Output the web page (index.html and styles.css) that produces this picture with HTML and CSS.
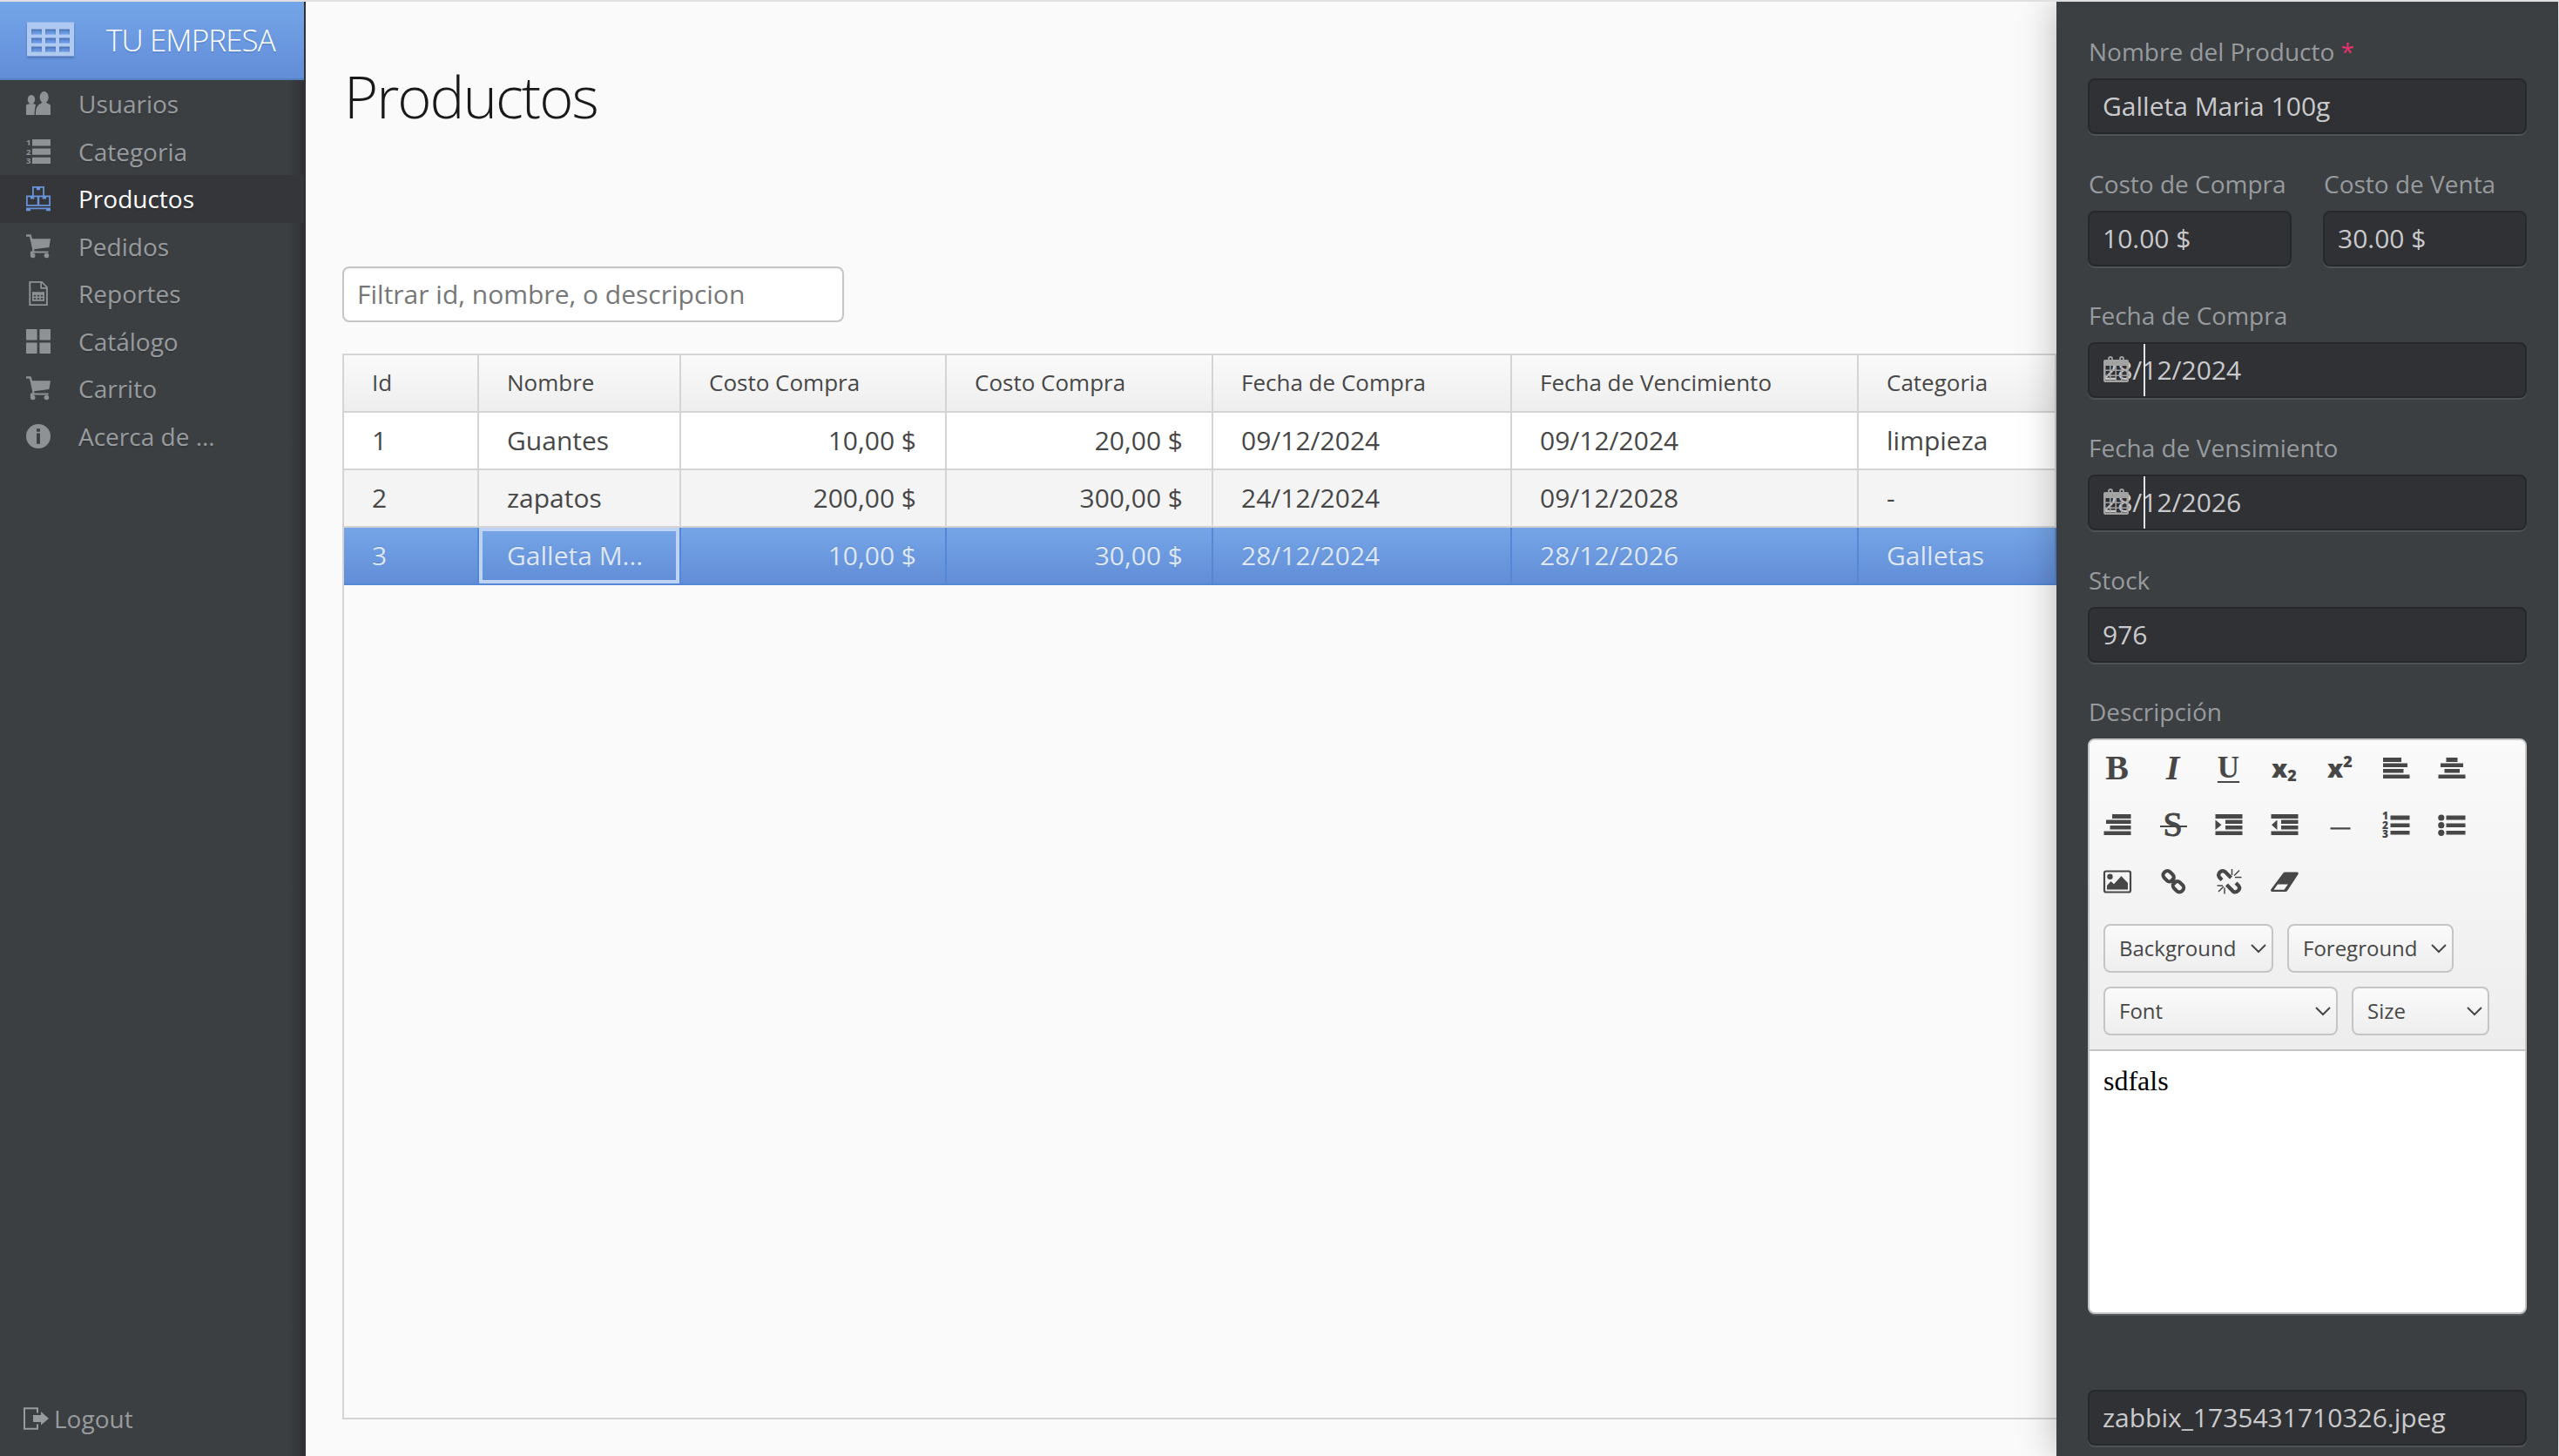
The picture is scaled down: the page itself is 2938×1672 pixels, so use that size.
FILE: index.html
```html
<!DOCTYPE html>
<html lang="es">
<head>
    <meta charset="UTF-8">
    <meta name="viewport" content="width=device-width, initial-scale=1.0">
    <link rel="stylesheet" href="styles.css">
    <title>Productos</title>
</head>
<body>

    <nav class="sidebar">
        <div class="brand">
            <svg class="brand-icon" viewBox="0 0 54 40">
                <path fill-rule="evenodd" d="M0 .5H54V39.5H0ZM5 8.5v6h12v-6ZM21 8.5v6h12v-6ZM37 8.5v6h12v-6ZM5 18.5v6h12v-6ZM21 18.5v6h12v-6ZM37 18.5v6h12v-6ZM5 28.5v6h12v-6ZM21 28.5v6h12v-6ZM37 28.5v6h12v-6Z"/>
            </svg>
            <span>TU EMPRESA</span>
        </div>

        <div class="menu">
            <div class="menu-item">
                <svg viewBox="0 0 16 16"><ellipse cx="3.4" cy="5.3" rx="2.4" ry="3"/><path d="M0 8.8Q1 8.2 2 8.1h3q1 .1 1.4.9Q5.6 10 5.5 15.4H0Z"/><ellipse cx="11.8" cy="3.8" rx="2.9" ry="3.8"/><path d="M6.2 15.4Q6 9.5 9.5 8l1-.9h2.7l1 .9q1.4.3 1.8 1.2v6.2Z"/></svg>
                <span>Usuarios</span>
            </div>
            <div class="menu-item">
                <svg viewBox="0 0 16 16"><path d="M4 0h12v4.3H4ZM4 6h12v4.2H4ZM4 11.8h12v4.2H4Z"/><text class="num" x="0" y="4">1</text><text class="num" x="0" y="10">2</text><text class="num" x="0" y="16">3</text></svg>
                <span>Categoria</span>
            </div>
            <div class="menu-item selected">
                <svg viewBox="0 0 16 16"><path fill-rule="evenodd" d="M4 0h8v6h4v7H0V6h4ZM5 1v5h6V1H9.2v1.4H6.8V1ZM1 7v5h6.3V7H5.3v1.3H2.8V7ZM8.7 7v5H15V7h-1.8v1.3h-2.5V7Z"/><path d="M0 14h16v2.2h-2.8V15H2.8v1.2H0Z"/></svg>
                <span>Productos</span>
            </div>
            <div class="menu-item">
                <svg viewBox="0 0 16 16"><path d="M0 .2h3.2L4 3h12l-.9 5.6-9.9 1.3.3 1.2H14.6v1.2H4.2L4 9.4 2.3 1.6H0Z"/><circle cx="4.4" cy="14" r="1.6"/><circle cx="13.4" cy="14" r="1.6"/><path d="M2.8 11.2h2v2h-2Z"/></svg>
                <span>Pedidos</span>
            </div>
            <div class="menu-item">
                <svg viewBox="0 0 16 16"><path fill-rule="evenodd" d="M1.9 0h8.6l3.7 3.7V16H1.9ZM3 1v14h10.1V5H9.3V1ZM10.3 1.2V4h2.8Z"/><path fill-rule="evenodd" d="M4 7h8v6H4ZM5 9v1h1.4V9ZM7.3 9v1h1.4V9ZM9.6 9v1H11V9ZM5 11v1h1.4v-1ZM7.3 11v1h1.4v-1ZM9.6 11v1H11v-1Z"/></svg>
                <span>Reportes</span>
            </div>
            <div class="menu-item">
                <svg viewBox="0 0 16 16"><path d="M0 0h7.2v7.2H0ZM8.8 0H16v7.2H8.8ZM0 8.8h7.2V16H0ZM8.8 8.8H16V16H8.8Z"/></svg>
                <span>Catálogo</span>
            </div>
            <div class="menu-item">
                <svg viewBox="0 0 16 16"><path d="M0 .2h3.2L4 3h12l-.9 5.6-9.9 1.3.3 1.2H14.6v1.2H4.2L4 9.4 2.3 1.6H0Z"/><circle cx="4.4" cy="14" r="1.6"/><circle cx="13.4" cy="14" r="1.6"/><path d="M2.8 11.2h2v2h-2Z"/></svg>
                <span>Carrito</span>
            </div>
            <div class="menu-item">
                <svg viewBox="0 0 16 16"><path fill-rule="evenodd" d="M8 0A8 8 0 1 1 8 16A8 8 0 1 1 8 0ZM6.9 3v2h2.2V3ZM6.9 6v7h2.2V6Z"/></svg>
                <span>Acerca de ...</span>
            </div>
        </div>

        <div class="logout">
            <svg viewBox="0 0 29 26"><path d="M16 6.500V1.200H1V24.800H16V19.500" fill="none" stroke="currentColor" stroke-width="2"/><path d="M11 9h9V5l9 8-9 7.500V17h-9Z"/></svg>
            <span>Logout</span>
        </div>
    </nav>

    <main class="content">
        <h1>Productos</h1>
        <input class="filter" type="text" placeholder="Filtrar id, nombre, o descripcion">

        <div class="grid">
            <table>
                <colgroup>
                    <col class="col-id">
                    <col class="col-nombre">
                    <col class="col-costo">
                    <col class="col-venta">
                    <col class="col-compra">
                    <col class="col-vence">
                    <col>
                </colgroup>
                <thead>
                    <tr>
                        <th>Id</th>
                        <th>Nombre</th>
                        <th>Costo Compra</th>
                        <th>Costo Compra</th>
                        <th>Fecha de Compra</th>
                        <th>Fecha de Vencimiento</th>
                        <th>Categoria</th>
                    </tr>
                </thead>
                <tbody>
                    <tr>
                        <td>1</td>
                        <td>Guantes</td>
                        <td class="right">10,00 $</td>
                        <td class="right">20,00 $</td>
                        <td>09/12/2024</td>
                        <td>09/12/2024</td>
                        <td>limpieza</td>
                    </tr>
                    <tr class="stripe">
                        <td>2</td>
                        <td>zapatos</td>
                        <td class="right">200,00 $</td>
                        <td class="right">300,00 $</td>
                        <td>24/12/2024</td>
                        <td>09/12/2028</td>
                        <td>-</td>
                    </tr>
                    <tr class="selected">
                        <td>3</td>
                        <td class="focused">Galleta M...</td>
                        <td class="right">10,00 $</td>
                        <td class="right">30,00 $</td>
                        <td>28/12/2024</td>
                        <td>28/12/2026</td>
                        <td>Galletas</td>
                    </tr>
                </tbody>
            </table>
        </div>
    </main>

    <aside class="form">
        <div class="field">
            <label>Nombre del Producto <span class="required">*</span></label>
            <input type="text" value="Galleta Maria 100g">
        </div>

        <div class="field-row">
            <div class="field">
                <label>Costo de Compra</label>
                <input type="text" value="10.00 $">
            </div>
            <div class="field">
                <label>Costo de Venta</label>
                <input type="text" value="30.00 $">
            </div>
        </div>

        <div class="field">
            <label>Fecha de Compra</label>
            <div class="date">
                <input type="text" value="28/12/2024">
                <svg class="calendar" viewBox="0 0 29 31"><path fill-rule="evenodd" d="M2 4H27Q29 4 29 6V28Q29 30 27 30H2Q0 30 0 28V6Q0 4 2 4ZM2.500 11v4.500H7V11ZM8.500 11v4.500h5V11ZM15 11v4.500h5V11ZM21.500 11v4.500h5V11ZM2.500 17v4.500H7V17ZM8.500 17v4.500h5V17ZM15 17v4.500h5V17ZM21.500 17v4.500h5V17ZM2.500 23v4.500H7V23ZM8.500 23v4.500h5V23ZM15 23v4.500h5V23ZM21.500 23v4.500h5V23Z"/><path fill="none" stroke="currentColor" stroke-width="1.800" d="M6 7V3Q6 1 8 1T10 3V7ZM19 7V3Q19 1 21 1T23 3V7Z"/></svg>
                <span class="separator"></span>
            </div>
        </div>

        <div class="field">
            <label>Fecha de Vensimiento</label>
            <div class="date">
                <input type="text" value="28/12/2026">
                <svg class="calendar" viewBox="0 0 29 31"><path fill-rule="evenodd" d="M2 4H27Q29 4 29 6V28Q29 30 27 30H2Q0 30 0 28V6Q0 4 2 4ZM2.500 11v4.500H7V11ZM8.500 11v4.500h5V11ZM15 11v4.500h5V11ZM21.500 11v4.500h5V11ZM2.500 17v4.500H7V17ZM8.500 17v4.500h5V17ZM15 17v4.500h5V17ZM21.500 17v4.500h5V17ZM2.500 23v4.500H7V23ZM8.500 23v4.500h5V23ZM15 23v4.500h5V23ZM21.500 23v4.500h5V23Z"/><path fill="none" stroke="currentColor" stroke-width="1.800" d="M6 7V3Q6 1 8 1T10 3V7ZM19 7V3Q19 1 21 1T23 3V7Z"/></svg>
                <span class="separator"></span>
            </div>
        </div>

        <div class="field">
            <label>Stock</label>
            <input type="text" value="976">
        </div>

        <div class="field">
            <label>Descripción</label>
            <div class="editor">
                <div class="toolbar">
                    <div class="tools">
                        <span class="tool bold">B</span>
                        <span class="tool italic">I</span>
                        <span class="tool underline">U</span>
                        <span class="tool script">x<span class="sub">2</span></span>
                        <span class="tool script">x<span class="sup">2</span></span>
                        <span class="tool"><svg viewBox="0 0 32 32"><path d="M1 4h21v5H1ZM1 10.500h28v4.500H1ZM1 17h23.500v4.500H1ZM1 23.500h30.500v4.500H1Z"/></svg></span>
                        <span class="tool"><svg viewBox="0 0 32 32"><path d="M9.500 4h13v5h-13ZM3 10.500h26v4.500H3ZM7.500 17h17.500v4.500H7.500ZM.5 23.500h31v4.500H.5Z"/></svg></span>

                        <span class="tool"><svg viewBox="0 0 32 32"><path d="M10 4h21.500v5H10ZM3 10.500h28.500v4.500H3ZM7.500 17h24v4.500h-24ZM.5 23.500h31v4.500H.5Z"/></svg></span>
                        <span class="tool strike">S</span>
                        <span class="tool"><svg viewBox="0 0 32 32"><path d="M.5 4h31v5H.5ZM12 10.500h19.500v4.500H12ZM12 17h19.500v4.500H12ZM.5 23.500h31v4.500H.5ZM.5 10.500L7.500 16.200.5 22Z"/></svg></span>
                        <span class="tool"><svg viewBox="0 0 32 32"><path d="M.5 4h31v5H.5ZM12 10.500h19.500v4.500H12ZM12 17h19.500v4.500H12ZM.5 23.500h31v4.500H.5ZM7.500 10.500L1 16.200 7.500 22Z"/></svg></span>
                        <span class="tool"><svg viewBox="0 0 32 32"><path d="M4.500 19.300h23v2.200h-23Z"/></svg></span>
                        <span class="tool"><svg viewBox="0 0 32 32"><path d="M9.500 5.500h22v5h-22ZM9.500 14.500h22v4.500h-22ZM9.500 23h22v4.500h-22Z"/><text class="list-num" x="0" y="10">1</text><text class="list-num" x="0" y="20.500">2</text><text class="list-num" x="0" y="31">3</text></svg></span>
                        <span class="tool"><svg viewBox="0 0 32 32"><path d="M9.500 5.500h22v5h-22ZM9.500 14.500h22v4.500h-22ZM9.500 23h22v4.500h-22Z"/><circle cx="3.800" cy="8" r="3.600"/><circle cx="3.800" cy="16.700" r="3.600"/><circle cx="3.800" cy="25.300" r="3.600"/></svg></span>

                        <span class="tool"><svg viewBox="0 0 32 32"><rect x="1" y="4.500" width="30" height="24" rx="2" fill="none" stroke="currentColor" stroke-width="2.200"/><circle cx="7.500" cy="10.700" r="3.200"/><path d="M4 25.500V21l4.500-5 3.500 3.200L20.500 10 28 18v7.500Z"/></svg></span>
                        <span class="tool"><svg viewBox="0 0 32 32"><g fill="none" stroke="currentColor" stroke-width="4"><rect x="4.200" y="5.500" width="13" height="9.500" rx="4.200" transform="rotate(45 10.700 10.200)"/><rect x="15.500" y="17.500" width="13" height="9.500" rx="4.200" transform="rotate(45 22 22.200)"/><path d="M13.500 13l6 6"/></g></svg></span>
                        <span class="tool"><svg viewBox="0 0 32 32"><g fill="none" stroke="currentColor"><path stroke-width="4.200" d="M8 14.500L5 11.300Q3 8.500 5.500 5.800T11.500 5L18.500 12M24 18l3 3Q29.500 24 26.700 26.700T21 27.800L13.500 20"/><path stroke-width="1.500" d="M19.500 2v7M28 3.500L22 9.500M23 11.500h7.500M2.500 21H9M4 28l6-6M11 23.500v7"/></g></svg></span>
                        <span class="tool"><svg viewBox="0 0 32 32"><path fill-rule="evenodd" d="M16.500 5.500H30.500Q32.500 6 31.500 8L19 27Q18.300 28 17 28H1.500Q-.8 27.500.5 25L14.200 6.800Q15 5.500 16.500 5.500ZM8 19.500L3.500 25.800H15.500L19.800 19.500Z"/></svg></span>
                    </div>
                    <div class="pickers">
                        <div class="picker background">Background<svg viewBox="0 0 18 10"><path d="M1 1l8 8 8-8"/></svg></div>
                        <div class="picker foreground">Foreground<svg viewBox="0 0 18 10"><path d="M1 1l8 8 8-8"/></svg></div>
                    </div>
                    <div class="pickers">
                        <div class="picker font">Font<svg viewBox="0 0 18 10"><path d="M1 1l8 8 8-8"/></svg></div>
                        <div class="picker size">Size<svg viewBox="0 0 18 10"><path d="M1 1l8 8 8-8"/></svg></div>
                    </div>
                </div>
                <div class="editor-text">sdfals</div>
            </div>
        </div>

        <input class="file" type="text" value="zabbix_1735431710326.jpeg">
    </aside>

</body>
</html>
```

FILE: styles.css
```css
* {
    box-sizing: border-box;
}
body {
    margin: 0;
    height: 1672px;
    display: flex;
    border-top: 2px solid #e0e0e0;
    background-color: #fafafa;
    font-family: "Open Sans", sans-serif;
    font-size: 30px;
    color: #474747;
    overflow: hidden;
}
svg {
    fill: currentColor;
    overflow: visible;
    flex: none;
}
input {
    font-family: inherit;
    font-size: 30px;
    outline: none;
}

/* Menu lateral */
.sidebar {
    width: 351px;
    flex: none;
    display: flex;
    flex-direction: column;
    background: linear-gradient(to left, #2f3034 0, #36393c 8px, #3b3f42 18px);
    border-right: 2px solid #303135;
    color: #989b9e;
    font-size: 28px;
}
.brand {
    height: 90px;
    display: flex;
    align-items: center;
    padding: 0 0 2px 31px;
    background: linear-gradient(to bottom, #74a5e8, #628dd8);
    border-bottom: 2px solid #5780be;
    color: #fff;
    font-size: 35px;
    font-weight: 300;
    white-space: nowrap;
    text-shadow: 0 2px 0 rgba(60, 100, 170, 0.3);
}
.brand span {
    letter-spacing: -0.9px;
}
.brand-icon {
    width: 54px;
    height: 40px;
    margin-right: 37px;
    color: #b0c9f1;
    filter: drop-shadow(0 2px 1px rgba(50, 85, 150, 0.6));
}
.menu-item {
    height: 54.5px;
    display: flex;
    align-items: center;
    padding-left: 30px;
    text-shadow: 0 2px 0 rgba(0, 0, 0, 0.12);
}
.menu-item svg {
    width: 28px;
    height: 28px;
    margin-right: 32px;
    color: #8f9295;
}
.menu-item.selected {
    background-color: #353639;
    color: #fff;
}
.menu-item.selected svg {
    color: #6894da;
}
.num {
    font-size: 5.5px;
    font-weight: 700;
}
.logout {
    margin-top: auto;
    height: 40px;
    margin-bottom: 23px;
    padding-left: 27px;
    display: flex;
    align-items: center;
}
.logout svg {
    width: 29px;
    height: 26px;
    margin-right: 6px;
}

/* Contenido */
.content {
    flex: 1;
    min-width: 0;
    display: flex;
    flex-direction: column;
    padding: 59px 0 42px 42px;
}
h1 {
    margin: 0 0 147px;
    padding-left: 2px;
    line-height: 98px;
    font-size: 67px;
    font-weight: 300;
    letter-spacing: -2px;
    color: #191919;
}
.filter {
    width: 576px;
    height: 64px;
    flex: none;
    padding: 0 15px 1px;
    border: 2px solid #c5c5c5;
    border-radius: 8px;
    background-color: #fff;
    box-shadow: inset 0 2px 0 #f7f7f7;
}
.filter::placeholder {
    color: #777;
    opacity: 1;
}
.grid {
    flex: 1;
    margin-top: 36px;
    border: 2px solid #d4d4d4;
    border-right: none;
}
table {
    width: 100%;
    table-layout: fixed;
    border-spacing: 0;
}
.col-id { width: 155px; }
.col-nombre { width: 232px; }
.col-costo { width: 305px; }
.col-venta { width: 306px; }
.col-compra { width: 343px; }
.col-vence { width: 398px; }
th, td {
    height: 66px;
    padding: 0 33px 1px 32px;
    border-right: 2px solid #d4d4d4;
    border-bottom: 2px solid #d4d4d4;
    line-height: 60px;
    text-align: left;
    white-space: nowrap;
    overflow: hidden;
}
th {
    padding-bottom: 2px;
    font-size: 26px;
    font-weight: 400;
    background: linear-gradient(to bottom, #fafafa, #eee);
}
td {
    background-color: #fff;
}
.right {
    text-align: right;
}
.stripe td {
    background-color: #f4f4f4;
}
tr.selected td {
    background: linear-gradient(to bottom, #75a5e7, #628dd7);
    border-color: #5487d5;
    color: #dde7f6;
    text-shadow: 0 -1px 0 rgba(60, 100, 170, 0.4);
}
tr.selected .focused {
    box-shadow: inset 0 0 0 4px #bed3f3;
}

/* Formulario */
.form {
    position: relative;
    z-index: 1;
    width: 576px;
    flex: none;
    margin-right: 1px;
    padding: 39px 36px 0;
    background-color: #3b3f42;
    box-shadow: 0 0 40px rgba(0, 0, 0, 0.27);
}
.field {
    margin-bottom: 38.7px;
}
.field-row {
    display: flex;
    gap: 36px;
}
.field-row .field {
    flex: 1;
    min-width: 0;
}
.form label {
    display: block;
    height: 36px;
    line-height: 36px;
    margin-bottom: 13px;
    padding-left: 1px;
    font-size: 28px;
    color: #989b9e;
    white-space: nowrap;
}
.required {
    color: #e6316f;
}
.form input {
    display: block;
    width: 100%;
    height: 64px;
    padding: 0 15px 1px;
    border: 2px solid #27282a;
    border-radius: 8px;
    background-color: #303134;
    box-shadow: 0 2px 0 #505356;
    color: #cacacc;
}
.date {
    position: relative;
}
.calendar {
    position: absolute;
    left: 18px;
    top: 16px;
    width: 29px;
    height: 31px;
    color: #a3a3a4;
}
.separator {
    position: absolute;
    left: 64px;
    top: 2px;
    width: 2px;
    height: 60px;
    background-color: #e4e4e4;
}

/* Editor de texto */
.editor {
    height: 661px;
    display: flex;
    flex-direction: column;
    border: 2px solid #c5c5c5;
    border-radius: 8px;
    background-color: #fff;
    box-shadow: 0 2px 0 #505356;
    overflow: hidden;
}
.toolbar {
    height: 357px;
    flex: none;
    border-bottom: 2px solid #c5c5c5;
    background: linear-gradient(to bottom, #fafafa, #ededed);
}
.tools {
    display: grid;
    grid-template-columns: repeat(7, 64px);
    grid-auto-rows: 65px;
    margin-bottom: 16px;
}
.tool {
    display: flex;
    align-items: center;
    justify-content: center;
    padding: 0 1px 2px 0;
    font-family: "Liberation Serif", serif;
    font-size: 40px;
    font-weight: 700;
}
.tool svg {
    width: 32px;
    height: 32px;
}
.italic {
    font-style: italic;
}
.underline {
    font-size: 35px;
    text-decoration: underline;
    text-decoration-thickness: 2px;
    text-underline-offset: 4px;
}
.strike {
    text-decoration: none;
    font-weight: 400;
    -webkit-text-stroke: 1px #474747;
    background: linear-gradient(#474747, #474747) 50% 33px / 31px 2px no-repeat;
}
.script {
    font-family: "Open Sans", sans-serif;
    font-size: 29px;
    font-weight: 800;
}
.sub, .sup {
    font-size: 18px;
}
.sub {
    margin-top: 16px;
}
.sup {
    margin-bottom: 16px;
}
.list-num {
    font-family: "Open Sans", sans-serif;
    font-size: 12px;
    font-weight: 800;
}
.pickers {
    display: flex;
    gap: 16px;
    padding-left: 16px;
    margin-bottom: 16px;
}
.picker {
    height: 56px;
    display: flex;
    align-items: center;
    justify-content: space-between;
    padding: 0 6px 1px 16px;
    border: 2px solid #c5c5c5;
    border-radius: 8px;
    background: linear-gradient(to bottom, #fafafa, #eee);
    font-size: 24px;
}
.picker svg {
    width: 18px;
    height: 10px;
    fill: none;
    stroke: #474747;
    stroke-width: 2;
}
.background { width: 195px; }
.foreground { width: 191px; }
.font { width: 269px; }
.size { width: 158px; }
.editor-text {
    padding: 16px;
    font-family: "Liberation Serif", serif;
    font-size: 32px;
    line-height: 36px;
    color: #000;
}
.form .file {
    margin-top: 87px;
}
```
